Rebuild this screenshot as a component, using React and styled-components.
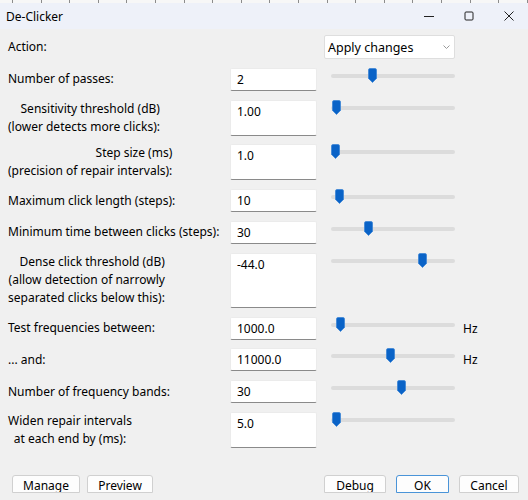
import styled, { createGlobalStyle } from "styled-components";

const GlobalStyle = createGlobalStyle`
  html, body {
    margin: 0;
    padding: 0;
  }
  body {
    width: 528px;
    height: 500px;
    overflow: hidden;
    background: #f0f0f0;
    font-family: "Segoe UI", "Noto Sans", "Liberation Sans", sans-serif;
    font-size: 12px;
    color: #000;
  }
`;

const Window = styled.div`
  width: 528px;
  height: 500px;
  display: flex;
  flex-direction: column;
  background: #f0f0f0;
`;

// strip of the track ruler peeking out behind the dialog
const Ruler = styled.div`
  height: 3px;
  background: repeating-linear-gradient(
      90deg,
      transparent 0 12px,
      #8c8c8c 12px 13px,
      transparent 13px 28.6px
    ),
    #f7f7f7;
`;

const TitleBar = styled.div`
  height: 26px;
  display: flex;
  align-items: center;
  background: #eef1f9;
  padding-left: 6px;
`;

const Title = styled.div`
  flex: 1;
  font-size: 12px;
`;

const Caption = styled.div`
  display: flex;
  gap: 2px;
  height: 100%;
`;

const CaptionButton = styled.div`
  width: 38px;
  height: 100%;
  display: flex;
  align-items: center;
  justify-content: center;
  svg {
    display: block;
  }
`;

const Body = styled.div`
  flex: 1;
  display: flex;
  flex-direction: column;
  padding: 6px 0 0 8px;
`;

const Form = styled.div`
  display: grid;
  grid-template-columns: 222px 87px 138px auto;
  row-gap: 8.8px;
  align-items: start;
`;

const Label = styled.div`
  grid-column: 1;
  align-self: center;
  justify-self: start;
  white-space: nowrap;
  line-height: 18px;
  text-align: ${(p) => p.align || "left"};
`;

const Field = styled.div`
  box-sizing: border-box;
  height: ${(p) => p.h}px;
  background: #fff;
  border: 1px solid #ebebeb;
  border-bottom-color: #8a8a8a;
  border-radius: 2px;
  padding: 3px 6px;
  line-height: 16px;
`;

const Select = styled.div`
  grid-column: 2 / span 2;
  justify-self: end;
  box-sizing: border-box;
  width: 131px;
  height: 24px;
  background: #fff;
  border: 1px solid #dedede;
  border-radius: 2px;
  display: flex;
  align-items: center;
  justify-content: space-between;
  padding: 0 4px 0 3px;
  font-size: 12.5px;
`;

const SliderBox = styled.div`
  position: relative;
  margin-left: 14px;
  width: 124px;
  height: 16px;
`;

const Track = styled.div`
  position: absolute;
  left: 0;
  right: 0;
  top: 6px;
  height: 4px;
  border-radius: 2px;
  background: #dcdcdc;
`;

const Thumb = styled.svg`
  position: absolute;
  top: 0;
`;

const Unit = styled.div`
  align-self: center;
  padding-left: 8px;
`;

const ButtonBar = styled.div`
  display: flex;
  margin-top: 27px;
  margin-left: 4px;
  padding-right: 9px;
`;

const ButtonGroup = styled.div`
  display: flex;
  gap: ${(p) => p.gap}px;
  margin-left: ${(p) => (p.right ? "auto" : "0")};
`;

const Button = styled.div`
  box-sizing: border-box;
  width: ${(p) => p.w}px;
  height: 18px;
  overflow: hidden;
  background: #fdfdfd;
  border: 1px solid ${(p) => (p.primary ? "#4a94d8" : "#d0d0d0")};
  border-radius: 3px 3px 0 0;
  padding-top: 2px;
  line-height: 16px;
  text-align: center;
`;

const settings = [
  { label: ["Number of passes:"], value: "2", h: 23, pos: 36.5 },
  {
    label: ["Sensitivity threshold (dB)", "(lower detects more clicks):"],
    align: "right",
    value: "1.00",
    h: 36,
    pos: 0.5,
  },
  {
    label: ["Step size (ms)", "(precision of repair intervals):"],
    align: "right",
    value: "1.0",
    h: 36,
    pos: 0,
  },
  { label: ["Maximum click length (steps):"], value: "10", h: 23, pos: 3.5 },
  {
    label: ["Minimum time between clicks (steps):"],
    value: "30",
    h: 23,
    pos: 33,
  },
  {
    label: [
      "Dense click threshold (dB)",
      "(allow detection of narrowly",
      "separated clicks below this):",
    ],
    align: "right",
    value: "-44.0",
    h: 55,
    pos: 87,
  },
  {
    label: ["Test frequencies between:"],
    value: "1000.0",
    h: 23,
    pos: 4.5,
    unit: "Hz",
  },
  { label: ["... and:"], value: "11000.0", h: 23, pos: 55, unit: "Hz" },
  { label: ["Number of frequency bands:"], value: "30", h: 23, pos: 66 },
  {
    label: ["Widen repair intervals", "at each end by (ms):"],
    align: "center",
    value: "5.0",
    h: 36,
    pos: 0.5,
  },
];

const Slider = ({ pos }) => (
  <SliderBox>
    <Track />
    <Thumb width="9" height="15" viewBox="0 0 9 15" style={{ left: pos }}>
      <path
        d="M0.5 2 Q0.5 0.5 2 0.5 H7 Q8.5 0.5 8.5 2 V10.5 L4.5 14.5 L0.5 10.5 Z"
        fill="#0a63c7"
        stroke="#3d86d6"
        strokeWidth="0.8"
      />
    </Thumb>
  </SliderBox>
);

const App = () => {
  return (
    <Window>
      <GlobalStyle />
      <Ruler />
      <TitleBar>
        <Title>De-Clicker</Title>
        <Caption>
          <CaptionButton>
            <svg width="10" height="10" viewBox="0 0 10 10">
              <path d="M0 5.5 H10" stroke="#222" strokeWidth="1" />
            </svg>
          </CaptionButton>
          <CaptionButton>
            <svg width="10" height="10" viewBox="0 0 10 10">
              <rect
                x="1"
                y="1"
                width="8"
                height="8"
                rx="1"
                fill="none"
                stroke="#222"
                strokeWidth="1"
              />
            </svg>
          </CaptionButton>
          <CaptionButton>
            <svg width="10" height="10" viewBox="0 0 10 10">
              <path d="M0.5 0.5 L9.5 9.5 M9.5 0.5 L0.5 9.5" stroke="#222" strokeWidth="1" />
            </svg>
          </CaptionButton>
        </Caption>
      </TitleBar>

      <Body>
        <Form>
          <Label>Action:</Label>
          <Select>
            <span>Apply changes</span>
            <svg width="7" height="4" viewBox="0 0 7 4">
              <path d="M0.5 0.5 L3.5 3.5 L6.5 0.5" fill="none" stroke="#9a9a9a" strokeWidth="1" />
            </svg>
          </Select>

          {settings.map((s, i) => [
            <Label key={`l${i}`} align={s.align}>
              {s.label.map((line, j) => (
                <div key={j}>{line}</div>
              ))}
            </Label>,
            <Field key={`f${i}`} h={s.h}>
              {s.value}
            </Field>,
            <Slider key={`s${i}`} pos={s.pos} />,
            <Unit key={`u${i}`}>{s.unit}</Unit>,
          ])}
        </Form>

        <ButtonBar>
          <ButtonGroup gap={7}>
            <Button w={68}>Manage</Button>
            <Button w={66}>Preview</Button>
          </ButtonGroup>
          <ButtonGroup gap={10} right>
            <Button w={62}>Debug</Button>
            <Button w={53} primary>
              OK
            </Button>
            <Button w={60}>Cancel</Button>
          </ButtonGroup>
        </ButtonBar>
      </Body>
    </Window>
  );
};

export default App;
